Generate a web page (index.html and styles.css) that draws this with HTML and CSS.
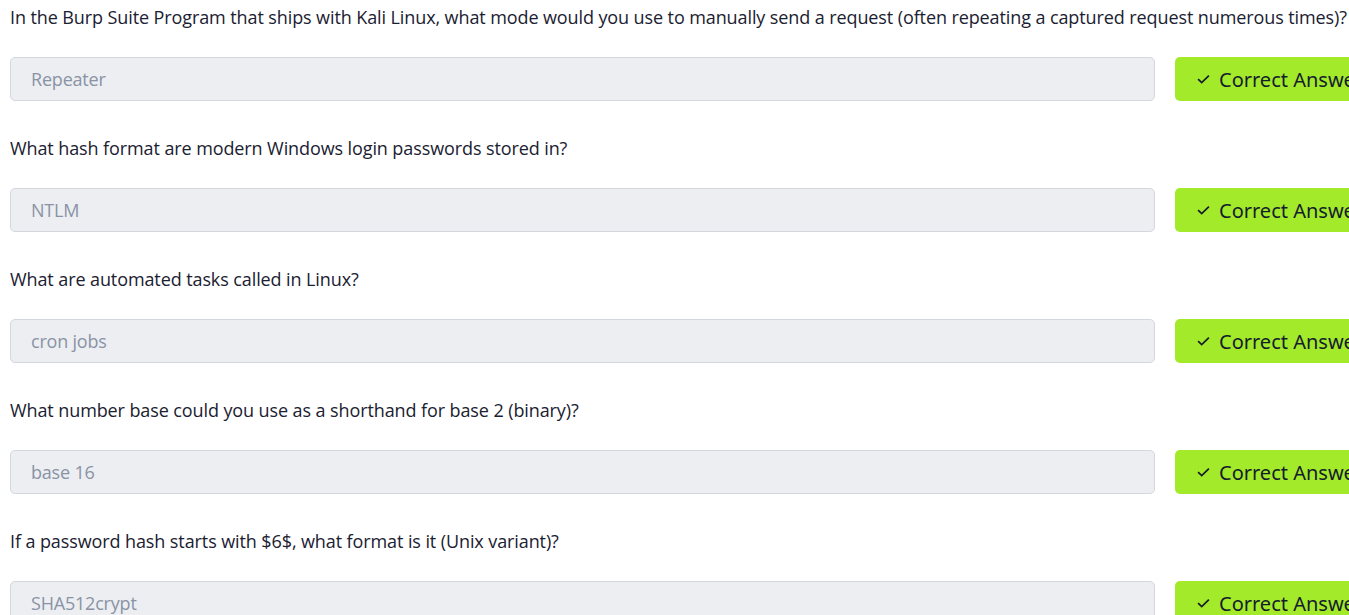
FILE: index.html
```html
<!DOCTYPE html>
<html>
<head>
<meta charset="utf-8">
<link rel="stylesheet" href="styles.css">
</head>
<body>
<div class="list">
  <div class="item">
    <p class="question">In the Burp Suite Program that ships with Kali Linux, what mode would you use to manually send a request (often repeating a captured request numerous times)?</p>
    <div class="row">
      <div class="answer">Repeater</div>
      <button class="btn"><svg class="check" viewBox="0 0 14 10"><path d="M1 4.5 L5 8.5 L13 0.8" fill="none" stroke="currentColor" stroke-width="1.9"/></svg>Correct Answer</button>
    </div>
  </div>
  <div class="item">
    <p class="question">What hash format are modern Windows login passwords stored in?</p>
    <div class="row">
      <div class="answer">NTLM</div>
      <button class="btn"><svg class="check" viewBox="0 0 14 10"><path d="M1 4.5 L5 8.5 L13 0.8" fill="none" stroke="currentColor" stroke-width="1.9"/></svg>Correct Answer</button>
    </div>
  </div>
  <div class="item">
    <p class="question">What are automated tasks called in Linux?</p>
    <div class="row">
      <div class="answer">cron jobs</div>
      <button class="btn"><svg class="check" viewBox="0 0 14 10"><path d="M1 4.5 L5 8.5 L13 0.8" fill="none" stroke="currentColor" stroke-width="1.9"/></svg>Correct Answer</button>
    </div>
  </div>
  <div class="item">
    <p class="question">What number base could you use as a shorthand for base 2 (binary)?</p>
    <div class="row">
      <div class="answer">base 16</div>
      <button class="btn"><svg class="check" viewBox="0 0 14 10"><path d="M1 4.5 L5 8.5 L13 0.8" fill="none" stroke="currentColor" stroke-width="1.9"/></svg>Correct Answer</button>
    </div>
  </div>
  <div class="item">
    <p class="question">If a password hash starts with $6$, what format is it (Unix variant)?</p>
    <div class="row">
      <div class="answer">SHA512crypt</div>
      <button class="btn"><svg class="check" viewBox="0 0 14 10"><path d="M1 4.5 L5 8.5 L13 0.8" fill="none" stroke="currentColor" stroke-width="1.9"/></svg>Correct Answer</button>
    </div>
  </div>
</div>
</body>
</html>
```
FILE: styles.css
```css
html, body {
  margin: 0;
  padding: 0;
  background: #ffffff;
  overflow: hidden;
}
body {
  font-family: "Open Sans", "Noto Sans", sans-serif;
  color: #1a2131;
}
.list {
  padding: 3px 0 0 10px;
  width: 1500px;
}
.item {
  margin-bottom: 33px;
}
.question {
  margin: 0;
  font-size: 18px;
  line-height: 28px;
  letter-spacing: -0.1px;
  white-space: nowrap;
}
.row {
  display: flex;
  gap: 20px;
  margin-top: 26px;
}
.answer {
  box-sizing: border-box;
  width: 1145px;
  height: 44px;
  background: #eceef2;
  border: 1px solid #d3d7de;
  border-radius: 5px;
  padding: 0 20px;
  display: flex;
  align-items: center;
  font-size: 18px;
  letter-spacing: -0.2px;
  color: #8a93a5;
}
.btn {
  box-sizing: border-box;
  height: 44px;
  background: #a3ea2a;
  border: none;
  border-radius: 5px;
  padding: 0 22px;
  display: flex;
  align-items: center;
  gap: 9px;
  font-family: "Noto Sans", sans-serif;
  font-size: 20px;
  color: #151c2b;
  white-space: nowrap;
}
.check {
  width: 13px;
  height: 9px;
  margin-top: 1px;
}
```
